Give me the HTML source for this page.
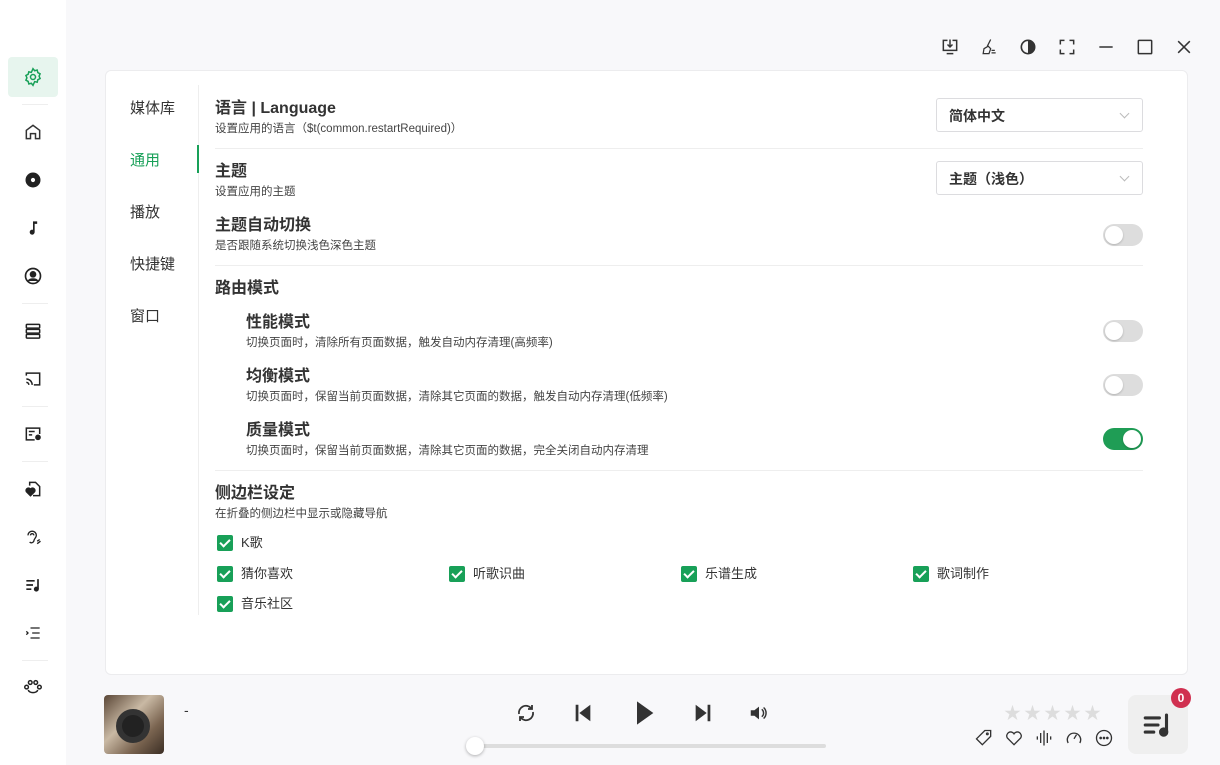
<!DOCTYPE html>
<html><head><meta charset="utf-8"><style>
*{box-sizing:border-box;margin:0;padding:0}
body{width:1220px;height:765px;overflow:hidden;background:#f8f8fa;font-family:"Liberation Sans","Noto Sans CJK SC",sans-serif;color:#333;position:relative}
.side{position:absolute;left:0;top:0;width:66px;height:765px;background:#fff}
.si{position:absolute;left:8px;width:50px;height:40px;display:flex;align-items:center;justify-content:center}
.sep{position:absolute;left:22px;width:26px;height:1px;background:#eee}
.card{position:absolute;left:105px;top:70px;width:1083px;height:605px;background:#fff;border:1px solid #ececee;border-radius:6px}
.nav{position:absolute;left:130px;font-size:15px;color:#333}
.vline{position:absolute;left:198px;top:85px;width:1px;height:530px;background:#eee}
.t{position:absolute;font-size:16px;font-weight:bold;color:#333;margin-top:-2px}
.d{position:absolute;font-size:11.5px;color:#444;margin-top:-2px}
.hr{position:absolute;left:215px;width:928px;height:1px;background:#eee}
.sel{position:absolute;left:936px;width:207px;height:34px;border:1px solid #dcdcdf;border-radius:3px;font-size:14px;font-weight:bold;padding:7px 12px;color:#333}
.sel:after{content:"";position:absolute;right:14px;top:11px;width:6px;height:6px;border-right:1px solid #bbb;border-bottom:1px solid #bbb;transform:rotate(45deg)}
.tg{position:absolute;left:1103px;width:40px;height:22px;border-radius:11px;background:#ddd}
.tg:after{content:"";position:absolute;left:2px;top:2px;width:18px;height:18px;border-radius:50%;background:#fff;box-shadow:0 1px 2px rgba(0,0,0,.2)}
.tg.on{background:#1f9d55}.tg.on:after{left:20px}
.cb{position:absolute;font-size:13px;color:#333;padding-left:24px;line-height:16px}
.cb:before{content:"";position:absolute;left:0;top:0;width:16px;height:16px;background:#18a058;border-radius:2px}
.cb:after{content:"";position:absolute;left:5px;top:2px;width:4px;height:8px;border-right:2px solid #fff;border-bottom:2px solid #fff;transform:rotate(45deg)}
svg{display:block}
</style></head><body>
<div class="side">
<div class="si" style="top:57px;background:#e7f5ee;border-radius:4px"><svg width="20" height="20" viewBox="0 0 24 24" fill="none" stroke="#18a058" stroke-width="1.8"><circle cx="12" cy="12" r="3"/><path d="M12 2l2 2.5 3-.8.8 3 2.7 1.5-1.2 2.8 1.2 2.8-2.7 1.5-.8 3-3-.8L12 22l-2-2.5-3 .8-.8-3L3.5 15.8 4.7 13 3.5 10.2 6.2 8.7l.8-3 3 .8z"/></svg></div>
<div class="sep" style="top:104px"></div>
<div class="si" style="top:112px"><svg width="20" height="20" viewBox="0 0 24 24" fill="none" stroke="#333" stroke-width="1.8"><path d="M4 20V10l8-6 8 6v10h-5v-6h-6v6z"/></svg></div>
<div class="si" style="top:160px"><svg width="20" height="20" viewBox="0 0 24 24"><circle cx="12" cy="12" r="9" fill="#222"/><circle cx="12" cy="12" r="2.5" fill="#fff"/></svg></div>
<div class="si" style="top:208px"><svg width="20" height="20" viewBox="0 0 24 24"><path d="M12 4h5v3h-3v10a3 3 0 1 1-2-2.8z" fill="#222"/></svg></div>
<div class="si" style="top:256px"><svg width="20" height="20" viewBox="0 0 24 24" fill="none" stroke="#222" stroke-width="2"><circle cx="12" cy="12" r="9"/><circle cx="12" cy="10" r="3" fill="#222"/><path d="M6.5 18c2-3 9-3 11 0" fill="#222"/></svg></div>
<div class="sep" style="top:303px"></div>
<div class="si" style="top:311px"><svg width="20" height="20" viewBox="0 0 24 24" fill="none" stroke="#222" stroke-width="1.8"><rect x="4" y="4" width="16" height="4.5" rx="1"/><rect x="4" y="10" width="16" height="4.5" rx="1"/><rect x="4" y="16" width="16" height="4.5" rx="1"/></svg></div>
<div class="si" style="top:359px"><svg width="20" height="20" viewBox="0 0 24 24" fill="none" stroke="#222" stroke-width="1.8"><path d="M4 8V5h16v14h-7M4 12a7 7 0 0 1 7 7M4 16a3 3 0 0 1 3 3"/></svg></div>
<div class="sep" style="top:406px"></div>
<div class="si" style="top:414px"><svg width="20" height="20" viewBox="0 0 24 24" fill="none" stroke="#222" stroke-width="1.8"><path d="M14 19H4V5h16v7M7 9h7M7 13h4"/><circle cx="18" cy="16" r="2.5" fill="#222"/></svg></div>
<div class="sep" style="top:461px"></div>
<div class="si" style="top:469px"><svg width="20" height="20" viewBox="0 0 24 24" fill="none" stroke="#222" stroke-width="1.8"><path d="M8 8V4h7l5 5v11h-8"/><path d="M9 20l-5-5a2.5 2.5 0 0 1 5-2.5 2.5 2.5 0 0 1 5 2.5z" fill="#222"/></svg></div>
<div class="si" style="top:517px"><svg width="20" height="20" viewBox="0 0 24 24" fill="none" stroke="#222" stroke-width="1.6"><path d="M6 10a5 5 0 1 1 10 0c0 3-3 4-3 7a3 3 0 0 1-5 1M9 10a2 2 0 1 1 4 0M17 17l3-2M17 20l4-3"/></svg></div>
<div class="si" style="top:565px"><svg width="20" height="20" viewBox="0 0 24 24" fill="none" stroke="#222" stroke-width="2"><path d="M4 7h10M4 12h8M4 17h6M18 5v12"/><circle cx="16" cy="17" r="2" fill="#222"/></svg></div>
<div class="si" style="top:613px"><svg width="20" height="20" viewBox="0 0 24 24" fill="none" stroke="#222" stroke-width="1.6"><path d="M9 6h11M11 12h9M9 18h11M4 10l2 2-2 2"/></svg></div>
<div class="sep" style="top:660px"></div>
<div class="si" style="top:668px"><svg width="22" height="22" viewBox="0 0 24 24" fill="none" stroke="#222" stroke-width="1.6"><circle cx="9" cy="6" r="2"/><circle cx="15" cy="6" r="2"/><circle cx="5" cy="11" r="2"/><circle cx="19" cy="11" r="2"/><path d="M7 14c0 4 10 4 10 0"/></svg></div>
</div>

<div style="position:absolute;top:37px;left:940px;display:flex;gap:19px">
<svg width="20" height="20" viewBox="0 0 24 24" fill="none" stroke="#333" stroke-width="1.8"><path d="M9 4H4v12h16V4h-5M12 3v9M9 9l3 3 3-3M8 20h8"/></svg>
<svg width="20" height="20" viewBox="0 0 24 24" fill="none" stroke="#333" stroke-width="1.5"><path d="M14 3l-4 8M6 14l5-3 3 3-2 6H5zM15 16h4M15 19h5"/></svg>
<svg width="20" height="20" viewBox="0 0 24 24"><circle cx="12" cy="12" r="8" fill="none" stroke="#333" stroke-width="2"/><path d="M12 4a8 8 0 0 1 0 16z" fill="#333"/></svg>
<svg width="20" height="20" viewBox="0 0 24 24" fill="none" stroke="#333" stroke-width="1.8"><path d="M4 9V4h5M15 4h5v5M20 15v5h-5M9 20H4v-5"/></svg>
<svg width="20" height="20" viewBox="0 0 24 24" stroke="#333" stroke-width="1.8"><path d="M4 12h16"/></svg>
<svg width="20" height="20" viewBox="0 0 24 24" fill="none" stroke="#333" stroke-width="1.8"><rect x="4" y="4" width="16" height="16" rx="1"/></svg>
<svg width="20" height="20" viewBox="0 0 24 24" stroke="#333" stroke-width="1.8"><path d="M5 5l14 14M19 5L5 19"/></svg>
</div>

<div class="card"></div>
<div class="nav" style="top:97px">媒体库</div>
<div class="nav" style="top:149px;color:#18a058">通用</div>
<div class="nav" style="top:201px">播放</div>
<div class="nav" style="top:253px">快捷键</div>
<div class="nav" style="top:305px">窗口</div>
<div class="vline"></div>
<div style="position:absolute;left:197px;top:145px;width:2px;height:28px;background:#18a058"></div>

<div class="t" style="left:215px;top:96px">语言 | Language</div>
<div class="d" style="left:215px;top:122px">设置应用的语言（$t(common.restartRequired)）</div>
<div class="sel" style="top:98px">简体中文</div>
<div class="hr" style="top:148px"></div>
<div class="t" style="left:215px;top:159px">主题</div>
<div class="d" style="left:215px;top:185px">设置应用的主题</div>
<div class="sel" style="top:161px">主题（浅色）</div>
<div class="t" style="left:215px;top:213px">主题自动切换</div>
<div class="d" style="left:215px;top:239px">是否跟随系统切换浅色深色主题</div>
<div class="tg" style="top:224px"></div>
<div class="hr" style="top:265px"></div>
<div class="t" style="left:215px;top:276px">路由模式</div>
<div class="t" style="left:246px;top:310px">性能模式</div>
<div class="d" style="left:246px;top:336px">切换页面时，清除所有页面数据，触发自动内存清理(高频率)</div>
<div class="tg" style="top:320px"></div>
<div class="t" style="left:246px;top:364px">均衡模式</div>
<div class="d" style="left:246px;top:390px">切换页面时，保留当前页面数据，清除其它页面的数据，触发自动内存清理(低频率)</div>
<div class="tg" style="top:374px"></div>
<div class="t" style="left:246px;top:418px">质量模式</div>
<div class="d" style="left:246px;top:444px">切换页面时，保留当前页面数据，清除其它页面的数据，完全关闭自动内存清理</div>
<div class="tg on" style="top:428px"></div>
<div class="hr" style="top:470px"></div>
<div class="t" style="left:215px;top:481px">侧边栏设定</div>
<div class="d" style="left:215px;top:507px">在折叠的侧边栏中显示或隐藏导航</div>
<div class="cb" style="left:217px;top:535px">K歌</div>
<div class="cb" style="left:217px;top:566px">猜你喜欢</div>
<div class="cb" style="left:449px;top:566px">听歌识曲</div>
<div class="cb" style="left:681px;top:566px">乐谱生成</div>
<div class="cb" style="left:913px;top:566px">歌词制作</div>
<div class="cb" style="left:217px;top:596px">音乐社区</div>

<div style="position:absolute;left:104px;top:695px;width:60px;height:59px;border-radius:4px;background:linear-gradient(135deg,#5a4636,#c9b9a4 40%,#7a6450 70%,#3b2e24);overflow:hidden"><div style="position:absolute;left:12px;top:14px;width:34px;height:34px;border-radius:50%;background:#222;border:6px solid #333"></div></div>
<div style="position:absolute;left:184px;top:702px;font-size:14px">-</div>
<div style="position:absolute;left:514px;top:699px;display:flex;align-items:center;gap:0">
<svg width="24" height="24" viewBox="0 0 24 24" fill="none" stroke="#333" stroke-width="1.8"><path d="M5 13a7 7 0 0 1 12-6l1 1M19 11a7 7 0 0 1-12 6l-1-1M18 4v4h-4M6 20v-4h4"/></svg>
<svg style="margin-left:34px" width="22" height="22" viewBox="0 0 24 24" fill="#333"><rect x="4" y="3" width="3" height="18"/><path d="M20 3v18L8 12z"/></svg>
<svg style="margin-left:36px" width="28" height="28" viewBox="0 0 24 24" fill="#333"><path d="M6 2l14 10-14 10z"/></svg>
<svg style="margin-left:34px" width="22" height="22" viewBox="0 0 24 24" fill="#333"><rect x="17" y="3" width="3" height="18"/><path d="M4 3v18l12-9z"/></svg>
<svg style="margin-left:34px" width="22" height="22" viewBox="0 0 24 24"><path d="M3 9h4l5-4v14l-5-4H3z" fill="#333"/><path d="M15 8a5 5 0 0 1 0 8M17 6a8 8 0 0 1 0 12" fill="none" stroke="#333" stroke-width="1.6"/></svg>
</div>
<div style="position:absolute;left:474px;top:744px;width:352px;height:4px;background:#ddd;border-radius:2px"></div>
<div style="position:absolute;left:466px;top:737px;width:18px;height:18px;border-radius:50%;background:#fff;box-shadow:0 1px 3px rgba(0,0,0,.3)"></div>
<div style="position:absolute;left:1004px;top:699px;font-size:17px;color:#ddd;letter-spacing:3px">★★★★★</div>
<div style="position:absolute;left:974px;top:728px;display:flex;gap:10px">
<svg width="20" height="20" viewBox="0 0 24 24" fill="none" stroke="#333" stroke-width="1.6"><path d="M13 3h7v7L10 20l-7-7z"/><circle cx="16" cy="7" r="1"/></svg>
<svg width="20" height="20" viewBox="0 0 24 24" fill="none" stroke="#333" stroke-width="1.6"><path d="M12 20l-8-8a4.5 4.5 0 0 1 8-5 4.5 4.5 0 0 1 8 5z"/></svg>
<svg width="20" height="20" viewBox="0 0 24 24" stroke="#333" stroke-width="1.6"><path d="M4 10v4M8 6v12M12 3v18M16 6v12M20 10v4"/></svg>
<svg width="20" height="20" viewBox="0 0 24 24" fill="none" stroke="#333" stroke-width="1.6"><path d="M5 18a8 8 0 1 1 14 0"/><path d="M12 13l3-5"/></svg>
<svg width="20" height="20" viewBox="0 0 24 24" fill="none" stroke="#333" stroke-width="1.6"><circle cx="12" cy="12" r="9"/><circle cx="8" cy="12" r=".8" fill="#333"/><circle cx="12" cy="12" r=".8" fill="#333"/><circle cx="16" cy="12" r=".8" fill="#333"/></svg>
</div>
<div style="position:absolute;left:1128px;top:695px;width:60px;height:59px;background:#efefef;border-radius:8px;display:flex;align-items:center;justify-content:center"><svg width="34" height="34" viewBox="0 0 24 24" fill="none" stroke="#333" stroke-width="2.2" stroke-linecap="round"><path d="M3 7h10M3 12h9M3 17h6M18 5v12"/><circle cx="16" cy="17" r="2.2" fill="#333"/></svg></div>
<div style="position:absolute;left:1171px;top:688px;width:20px;height:20px;border-radius:50%;background:#d03050;color:#fff;font-size:12px;font-weight:bold;text-align:center;line-height:20px">0</div>
</body></html>
